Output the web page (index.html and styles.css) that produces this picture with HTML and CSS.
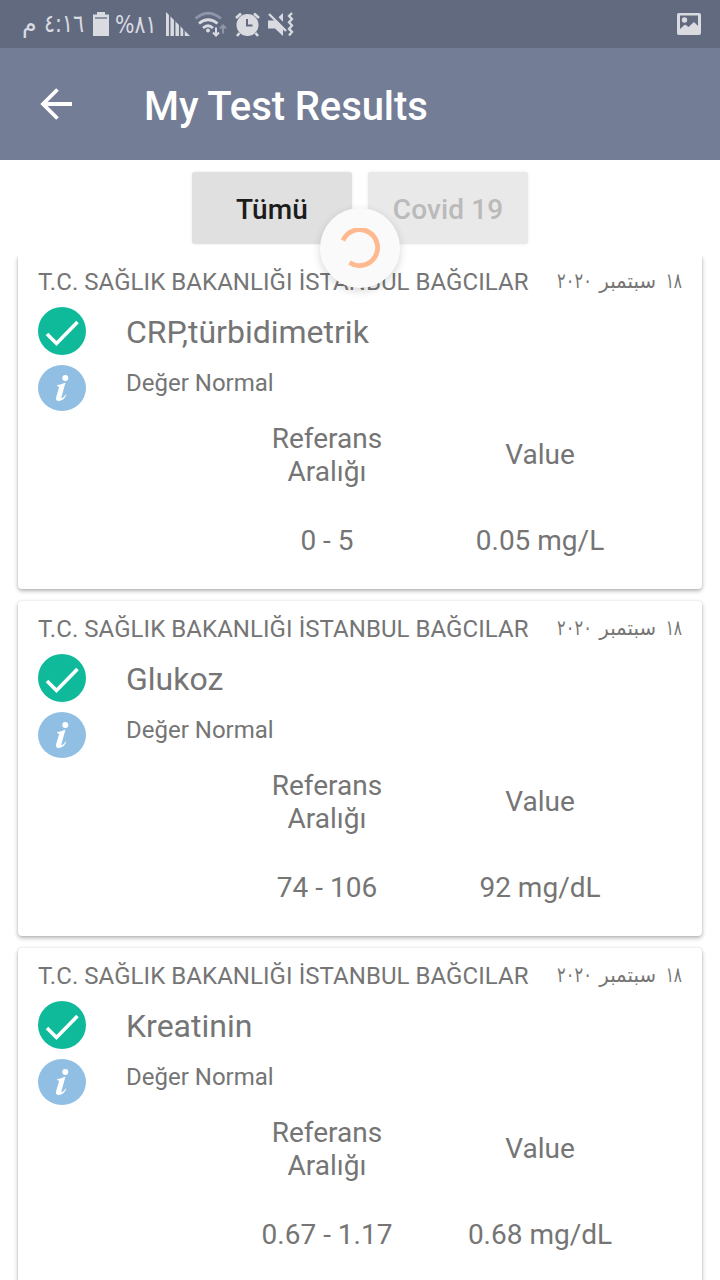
FILE: index.html
```html
<!DOCTYPE html>
<html lang="tr">
<head>
<meta charset="utf-8">
<title>My Test Results</title>
<link rel="stylesheet" href="styles.css">
</head>
<body>
<svg class="defs" width="0" height="0">
  <symbol id="check" viewBox="0 0 48 48"><circle cx="24" cy="24" r="24" fill="#0fba9b"/><path d="M9 27L18.500 36.500L39.500 15" fill="none" stroke="#fff" stroke-width="3.600"/></symbol>
  <symbol id="info" viewBox="0 0 48 46"><ellipse cx="24" cy="23" rx="24" ry="23" fill="#90bfe3"/><circle cx="27.300" cy="13" r="3" fill="#fff"/><path d="M19 20.300Q23 19.500 27.500 17.600L23.600 31.500Q23 34.200 24.500 33Q26.500 31.300 27.700 29.500L28.300 30Q25.500 35.800 20.700 36Q17.200 36 18.200 32L21 22.500Q21.300 21 19 21.200Z" fill="#fff"/></symbol>
</svg>
<div class="statusbar">
  <span class="ar clock-half"><span>م</span></span>
  <span class="ar clock"><span>٤:١٦</span></span>
  <svg class="battery" width="16" height="24" viewBox="0 0 16 24"><path d="M4 0h8v2.500h4V24H0V2.500h4z" fill="#d9dbe1"/><path d="M2 5h12v2H2z" fill="#8d94a5"/></svg>
  <span class="ar percent"><span>%٨١</span></span>
  <svg class="icons" width="130" height="30" viewBox="0 0 130 30" fill="none" stroke="#d9dbe1">
    <path d="M1 3L25 27H1z" fill="#d9dbe1" stroke="none"/>
    <path d="M4.700 4v24M9.700 8v20M14.700 14v14M19 18v10" stroke="#626a7f" stroke-width="1.500"/>
    <path d="M30.500 9.500Q43 -1 56 9.500" stroke="#8f95a6" stroke-width="2.700"/>
    <path d="M34 14.500Q43 7 52.500 14.500M38 19Q43 14.500 48 19" stroke-width="2.700"/>
    <circle cx="43" cy="21.500" r="2" fill="#d9dbe1" stroke="none"/>
    <path d="M51 18.500v8M48 23.500l3 3 3-3" stroke-width="2"/><path d="M58 24.500v-8M55 19.500l3-3 3 3" stroke="#8f95a6" stroke-width="2"/>
    <circle cx="82.500" cy="16" r="11" fill="#d9dbe1" stroke="none"/>
    <path d="M71 9l5-4.500M94 9l-5-4.500M74.500 24l-2.500 3M90.500 24l2.500 3" stroke-width="2.700"/>
    <path d="M82 10v6.500h5.500" stroke="#626a7f" stroke-width="2"/>
    <path d="M103 11.500h7L118 4v23l-8-7.500h-7z" fill="#d9dbe1" stroke="none"/>
    <path d="M105 2L121 18.500" stroke="#626a7f" stroke-width="3.500"/><path d="M104 5L121 22" stroke-width="2.300"/>
    <path d="M127 4l-3 3 3 3-3 3.300 3 3.300-3 3.300 3 3-3 3.500" stroke-width="2.300"/>
  </svg>
  <svg class="picture" width="24" height="22" viewBox="0 0 24 22"><rect width="24" height="22" rx="2" fill="#d9dbe1"/><path d="M3 2.500h18V13L17 9L11.500 14L8 11.500L3 16z" fill="#626a7f"/><circle cx="7.500" cy="7" r="2.700" fill="#d9dbe1"/></svg>
</div>
<div class="appbar">
  <svg class="back" width="32" height="32" viewBox="0 0 32 32" fill="none" stroke="#fff" stroke-width="3.800"><path d="M32 16H3M17.500 1.500L3 16L17.500 30.500"/></svg>
  <h1>My Test Results</h1>
</div>
<div class="tabs">
  <div class="tab active">Tümü</div>
  <div class="tab">Covid 19</div>
  <div class="spinner"><svg width="40" height="40" viewBox="0 0 40 40"><path d="M3 12.500A18 18 0 1 1 9.500 34.500" fill="none" stroke="#ffb990" stroke-width="4.800"/></svg></div>
</div>
<div class="list">
  <div class="card">
    <div class="head"><span class="org">T.C. SAĞLIK BAKANLIĞI İSTANBUL BAĞCILAR</span><span class="ar date" dir="rtl"><span class="day">١٨</span><span class="month">سبتمبر</span><span class="year">٢٠٢٠</span></span></div>
    <div class="row name"><svg width="48" height="48"><use href="#check"/></svg><span>CRP,türbidimetrik</span></div>
    <div class="row note"><svg width="48" height="46"><use href="#info"/></svg><span>Değer Normal</span></div>
    <div class="grid"><div>Referans<br>Aralığı</div><div>Value</div><div>0 - 5</div><div>0.05 mg/L</div></div>
  </div>
  <div class="card">
    <div class="head"><span class="org">T.C. SAĞLIK BAKANLIĞI İSTANBUL BAĞCILAR</span><span class="ar date" dir="rtl"><span class="day">١٨</span><span class="month">سبتمبر</span><span class="year">٢٠٢٠</span></span></div>
    <div class="row name"><svg width="48" height="48"><use href="#check"/></svg><span>Glukoz</span></div>
    <div class="row note"><svg width="48" height="46"><use href="#info"/></svg><span>Değer Normal</span></div>
    <div class="grid"><div>Referans<br>Aralığı</div><div>Value</div><div>74 - 106</div><div>92 mg/dL</div></div>
  </div>
  <div class="card">
    <div class="head"><span class="org">T.C. SAĞLIK BAKANLIĞI İSTANBUL BAĞCILAR</span><span class="ar date" dir="rtl"><span class="day">١٨</span><span class="month">سبتمبر</span><span class="year">٢٠٢٠</span></span></div>
    <div class="row name"><svg width="48" height="48"><use href="#check"/></svg><span>Kreatinin</span></div>
    <div class="row note"><svg width="48" height="46"><use href="#info"/></svg><span>Değer Normal</span></div>
    <div class="grid"><div>Referans<br>Aralığı</div><div>Value</div><div>0.67 - 1.17</div><div>0.68 mg/dL</div></div>
  </div>
</div>
</body>
</html>
```
FILE: styles.css
```css
* { box-sizing: border-box; }
body { margin: 0; width: 720px; height: 1280px; overflow: hidden; display: flex; flex-direction: column; background: #fff; font-family: Roboto, "DejaVu Sans", sans-serif; color: #757575; }
svg { display: block; flex: none; }
.defs { position: absolute; }
.ar { font-family: "DejaVu Sans", sans-serif; white-space: nowrap; flex: none; }
.ar > span { display: inline-block; }

.statusbar { height: 48px; flex: none; background: #626a7f; color: #d9dbe1; display: flex; align-items: center; padding-left: 22px; font-size: 25px; }
.clock-half { width: 22px; }
.clock-half > span { transform: translateY(-1px) scaleX(.95); transform-origin: left; }
.clock { width: 49px; }
.clock > span { transform: translateY(-1px) scaleX(.82); transform-origin: left; }
.percent > span { transform: scaleX(.82); transform-origin: left; }
.percent { width: 50px; margin-left: 6px; }
.picture { margin-left: auto; margin-right: 19px; }

.appbar { height: 112px; flex: none; background: #737d96; display: flex; align-items: center; padding-left: 40px; gap: 72px; }
h1 { margin: 6px 0 0; color: #fff; font-size: 40px; font-weight: 500; line-height: 48px; letter-spacing: -.08px; }

.tabs { height: 96px; flex: none; position: relative; display: flex; justify-content: center; gap: 16px; padding-top: 12px; }
.tab { width: 160px; height: 72px; border-radius: 3px; background: #e9e9e9; color: #bababa; font-size: 28px; font-weight: 500; line-height: 75px; text-align: center; letter-spacing: .1px; box-shadow: 0 0 3px rgba(0,0,0,.1); }
.tab.active { background: #e0e0e0; color: #1c1c1c; }
.spinner { position: absolute; z-index: 2; left: 320px; top: 48px; width: 80px; height: 80px; border-radius: 50%; background: #fafafa; display: grid; place-items: center; box-shadow: 0 3px 8px rgba(0,0,0,.16); }

.list { flex: 1; min-height: 0; overflow: hidden; padding: 0 18px; display: flex; flex-direction: column; gap: 12px; }
.card { height: 335px; flex: none; padding: 12px 20px; border-radius: 4px; background: #fff; box-shadow: 0 2px 4px rgba(0,0,0,.3), 0 0 2px rgba(0,0,0,.1); }
.card:first-child { height: 333px; padding-top: 10px; border-radius: 0 0 4px 4px; }
.head { height: 30px; display: flex; justify-content: space-between; align-items: center; }
.org { font-size: 24px; line-height: 30px; padding-top: 2px; white-space: nowrap; letter-spacing: .06px; }
.date { display: flex; width: 124px; font-size: 19px; line-height: 28px; }
.date > span { transform-origin: right; flex: none; }
.day { width: 26px; transform: translateY(-1px) scale(.8, 1.12); }
.month { width: 64px; transform: translateY(-1px) scale(1.04, 1.08); }
.year { transform: translateY(-1px) scale(.85, 1.12); }
.row { display: flex; gap: 40px; }
.name { margin-top: 11px; height: 48px; font-size: 32px; line-height: 51px; }
.note { margin-top: 10px; height: 46px; font-size: 24px; line-height: 36px; }
.grid { display: grid; grid-template-columns: 213px 213px; grid-template-rows: 66px 104px; margin-left: 182.500px; margin-top: 11px; align-items: center; text-align: center; font-size: 28px; line-height: 33px; }
.grid > div:nth-child(2) { padding-bottom: 2px; }
```
